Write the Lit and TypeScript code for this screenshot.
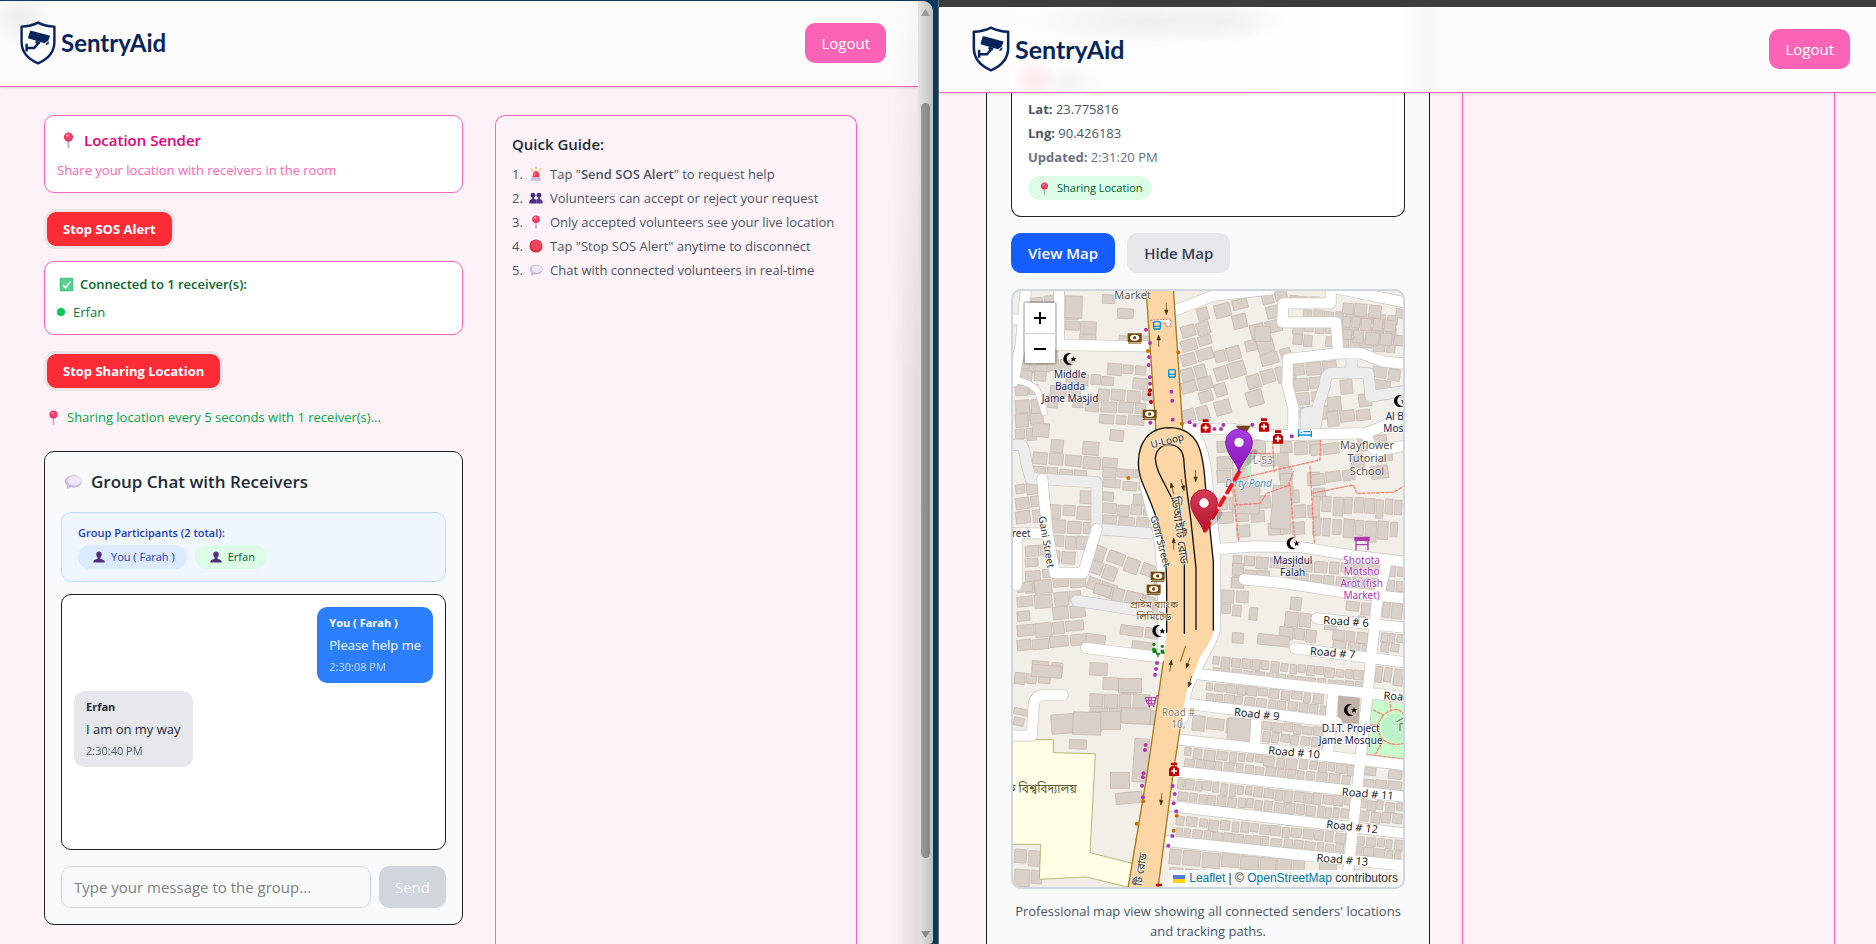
import { LitElement, html, svg, css } from "lit";
import { customElement, property, state } from "lit/decorators.js";

/* ---------- shared styles ---------- */

const base = css`
  * { box-sizing: border-box; }
  h1, h2, h3, p, ol, ul { margin: 0; padding: 0; font-size: inherit; font-weight: inherit; }
  ol, ul { list-style: none; }
  button, input { font: inherit; }
  button { cursor: pointer; border: 0; white-space: nowrap; }
  svg { display: block; flex: none; }
`;

/* ---------- emoji-like icons ---------- */

const glyphs: Record<string, unknown> = {
  pin: svg`<rect x="8.9" y="9" width="2.2" height="10.5" rx="1" fill="#b9aec4"/>
    <circle cx="10" cy="6" r="5.4" fill="#e8315f"/><circle cx="10.6" cy="5.2" r="4" fill="#f4436c"/>
    <circle cx="8.6" cy="4" r="1.5" fill="#ff9db5"/>`,
  check: svg`<rect x="1" y="1" width="18" height="18" rx="1.5" fill="#3fbf7c"/>
    <rect x="2.4" y="2" width="15.6" height="15.6" rx="1" fill="#58d08f"/>
    <path d="M5 10.6l3.6 3.6L15.4 6.4" fill="none" stroke="#fff" stroke-width="2"/>`,
  siren: svg`<path d="M10 .5v3M3.2 2.6l2 2.6M16.8 2.6l-2 2.6" stroke="#f2b950" stroke-width="1.6" stroke-linecap="round"/>
    <path d="M4.6 15l1.6-7.2Q6.6 6 8.4 6h3.2q1.8 0 2.2 1.8L15.400 15z" fill="#ee3a55"/>
    <path d="M7.600 13l1-5" stroke="#ff8c9a" stroke-width="1.600"/>
    <path d="M2.500 19.500q0-5 3-5h9q3 0 3 5z" fill="#cdbbe8"/>`,
  people: svg`<g fill="#4b2f7f"><circle cx="5.800" cy="6" r="3.400"/><circle cx="14.200" cy="6" r="3.400"/>
    <path d="M4.500 8h2.700v3l3 1.600v5.400H.500v-3.400q0-1.600 4-3.600z"/><path d="M12.800 8h2.700v3q4 2 4 3.600V18h-9.200v-5.400l2.500-1.600z" fill="#5a3b94"/></g>`,
  person: svg`<g fill="#53307f"><ellipse cx="10" cy="6" rx="4.600" ry="5"/><path d="M7.600 9h4.800v4l6 2.600q1 .6 1 3.400H.6q0-2.800 1-3.400l6-2.600z"/></g>`,
  ball: svg`<circle cx="10" cy="10" r="9.400" fill="#d9304a"/><circle cx="10.800" cy="9" r="7.600" fill="#e8465c"/>`,
  bubble: svg`<path d="M10.400 2.500c5.200 0 9.200 2.900 9.200 6.900s-4 6.900-9.200 6.900c-1.200 0-2.300-.1-3.300-.4L3.600 17.800c-.6.3-1-.1-.8-.7l.8-3.200C1.800 12.700.8 11.200.8 9.400c0-4 4.400-6.900 9.600-6.900z" fill="#cbbbe0"/>
    <ellipse cx="11.400" cy="8.600" rx="7.600" ry="5.200" fill="#eee6f7"/>`,
};

const icon = (name: string, size: number) =>
  html`<svg width=${size} height=${size} viewBox="0 0 20 20" aria-hidden="true">${glyphs[name]}</svg>`;

/* ---------- brand bar ---------- */

@customElement("brand-bar")
class BrandBar extends LitElement {
  static styles = [base, css`
    :host { display: block; position: relative; }
    .bar {
      height: 86px; display: flex; align-items: center; justify-content: space-between;
      padding: 0 32px 1px 20px; background: #fefbfd; border-bottom: 1px solid #fb64b6;
      box-shadow: 0 1px 3px rgba(0, 0, 0, .12);
    }
    .left { background: radial-gradient(circle at 20px 16px, #eeeced 0, #fefbfd 30px); }
    .wide {
      padding: 0 26px 1px 33px;
      background:
        radial-gradient(ellipse 130px 26px at 210px 14px, rgba(232, 232, 234, .7), transparent),
        radial-gradient(ellipse 60px 24px at 285px 14px, rgba(232, 232, 234, .5), transparent),
        radial-gradient(circle 22px at 96px 73px, rgba(255, 215, 218, .6), transparent),
        radial-gradient(ellipse 34px 22px at 130px 76px, rgba(236, 238, 240, .6), transparent),
        linear-gradient(90deg, #fefbfd 60px, #fdfdfe 90px, #fff 460px, #f8f7f8 490px, #fefbfd 512px);
    }
    .brand { display: flex; align-items: center; gap: 5px; color: #06255a; text-decoration: none; }
    .name { font: 700 24px/32px Lato, sans-serif; }
    .wide .name { font-size: 25px; }
    .out {
      height: 40px; padding: 0 16px; border-radius: 10px; background: #fb64b6; color: #fff;
      font-size: 15px; line-height: 24px;
    }
  `];
  @property({ type: Boolean }) wide = false;
  render() {
    const h = this.wide ? 46 : 44;
    return html`<header class="bar ${this.wide ? "wide" : "left"}">
      <a class="brand" href="#">
        <svg width=${h - 8} height=${h} viewBox="0 0 36 44" aria-hidden="true">
          <path d="M18 1.600C13 4.200 7.500 5.400 1.600 5.600V21c0 9.800 6.400 17 16.400 21.400C28 38 34.400 30.800 34.400 21V5.600C28.500 5.400 23 4.200 18 1.600z" fill="#fff" stroke="#06255a" stroke-width="2.400" stroke-linejoin="round"/>
          <path d="M11.200 9.800l18.200 4.800c.6.200.7.600.5 1l-1.700 4.200-3.600 2.400L8.800 17.600c-.6-.2-.9-.6-.7-1.200l1.800-5.800c.2-.6.6-.9 1.300-.8z" fill="#06255a"/>
          <path d="M26.400 22l2.800-1.800-.8 3-2.600.8z" fill="#06255a"/>
          <path d="M6.600 22.800v7.600M7 27h7.200l3.800-4.400M15.600 20.800l4.400 1.400" fill="none" stroke="#06255a" stroke-width="2.400"/>
        </svg>
        <span class="name">SentryAid</span>
      </a>
      <button class="out">Logout</button>
    </header>`;
  }
}

/* ---------- city map ---------- */

type Block = [number, number, number, number, number, number, number, number];

// x, y, width, height, angle, plot width, plot height, share of plots built on
const blocks: Block[] = [
  [60, 40, 100, 250, -6, 38, 34, 0.75], [195, 24, 240, 145, 2, 48, 40, 0.6],
  [60, 215, 380, 180, 4, 42, 38, 0.6], [45, 300, 60, 170, -4, 40, 44, 0.8],
  [100, 410, 300, 160, 5, 46, 44, 0.55], [150, 610, 130, 250, 3, 44, 46, 0.75],
  [310, 545, 150, 180, 4, 46, 36, 0.8], [45, 600, 75, 130, -8, 40, 40, 0.85],
  [75, 780, 80, 150, -4, 40, 38, 0.8], [270, 770, 220, 150, 20, 52, 50, 0.6],
  [50, 890, 190, 230, -6, 50, 44, 0.8], [240, 880, 240, 60, 14, 46, 46, 0.7],
  [260, 1000, 200, 70, 8, 60, 44, 0.6], [270, 1130, 190, 170, 2, 52, 46, 0.6],
  [45, 1120, 130, 70, 5, 46, 40, 0.6], [44, 1265, 40, 60, 12, 40, 26, 0.9],
  [45, 1690, 80, 110, 4, 40, 60, 0.7],
  [540, 85, 90, 320, -16, 42, 42, 0.75], [640, 60, 200, 160, -14, 46, 44, 0.7],
  [640, 200, 210, 210, -16, 48, 50, 0.75], [870, 30, 100, 12, 2, 34, 20, 0.9],
  [880, 70, 310, 120, 4, 34, 38, 0.8], [1030, 50, 170, 130, 6, 36, 40, 0.8],
  [880, 235, 100, 190, -5, 42, 44, 0.75], [980, 290, 120, 140, -6, 38, 46, 0.75],
  [1120, 240, 90, 80, 8, 46, 40, 0.7], [650, 470, 200, 300, -3, 46, 42, 0.45],
  [840, 470, 120, 300, -3, 34, 48, 0.8], [940, 630, 265, 150, 3, 30, 66, 0.9],
  [930, 480, 270, 140, -8, 44, 44, 0.5], [700, 810, 430, 60, 4, 38, 40, 0.85],
  [665, 830, 60, 290, 3, 36, 42, 0.5], [750, 920, 260, 130, 6, 36, 46, 0.5],
  [1040, 945, 65, 60, 6, 34, 40, 0.8], [1000, 1030, 110, 60, 6, 34, 36, 0.85],
  [1150, 840, 58, 90, 3, 40, 44, 0.9], [1150, 950, 58, 60, 6, 28, 56, 0.9],
  [1145, 1040, 62, 62, 7, 26, 30, 0.9], [640, 1110, 450, 70, 6, 28, 34, 0.95],
  [1130, 1140, 75, 60, 8, 30, 52, 0.9], [620, 1190, 360, 66, 6, 28, 32, 0.95],
  [580, 1290, 170, 60, 6, 50, 48, 0.5], [790, 1305, 190, 70, 7, 27, 33, 0.9],
  [555, 1385, 510, 72, 6, 29, 34, 0.9], [1095, 1445, 110, 66, 6, 36, 34, 0.8],
  [535, 1480, 520, 80, 6, 26, 38, 0.95], [1080, 1540, 125, 70, 6, 25, 34, 0.95],
  [530, 1590, 510, 76, 6, 28, 36, 0.95], [1068, 1650, 140, 66, 6, 27, 32, 0.95],
  [510, 1690, 520, 120, 5, 48, 54, 0.85], [1055, 1750, 150, 50, 6, 32, 40, 0.9],
];

// x, y, width, height, angle of single large buildings
const landmarks: number[][] = [
  [196, 32, 52, 66, 2], [152, 1290, 150, 58, -4], [220, 1280, 84, 68, 2], [303, 1280, 58, 54, 0],
  [365, 1268, 88, 46, 3], [208, 1363, 52, 28, 2], [331, 1462, 58, 48, 0], [346, 1525, 80, 34, -5],
  [355, 1180, 70, 42, 0], [685, 1298, 70, 70, 4], [97, 1138, 90, 36, 4], [405, 1360, 44, 130, 4],
  [775, 1045, 95, 32, 6], [765, 125, 46, 44, 0], [700, 605, 80, 80, 2], [820, 600, 60, 130, 4],
];

function plots(): number[][] {
  let seed = 7;
  const rnd = () => ((seed = (seed * 16807) % 2147483647), seed / 2147483647);
  const out: number[][] = [];
  for (const [x, y, w, h, a, cw, ch, fill] of blocks) {
    const slope = Math.tan((a * Math.PI) / 180);
    const rows = Math.max(1, Math.round(h / ch));
    for (let r = 0; r < rows; r++) {
      let px = x;
      while (px < x + w - 10) {
        const bw = cw * (0.65 + rnd() * 0.5);
        const bh = ch * (0.66 + rnd() * 0.3);
        if (rnd() < fill + 0.08) out.push([px, y + r * ch + (px - x) * slope + rnd() * 4, bw, bh, a]);
        px += bw + 3 + rnd() * 5;
      }
    }
  }
  return out.concat(landmarks);
}

const service = [
  "M30 480H65Q74 490 78 530L92 580L290 592V732L455 745",
  "M230 947L440 980", "M1055 200V262L990 265Q975 270 975 300L960 345L950 378L918 384V430",
  "M1055 262L1105 265L1112 334L1215 318", "M955 370L945 430",
];
const streets = [
  "M78 10L62 180L40 290", "M30 104H60", "M177 10V180L452 184",
  "M127 582L142 740L164 864H250L290 732", "M30 745H142", "M50 760V900", "M258 1089L490 1118",
  "M30 1352H95L102 1255Q106 1232 130 1230H188",
  "M525 76L640 32L810 14", "M992 10V55H850L847 112H1008L1015 205",
  "M1215 236L1150 230L1080 204L1015 205L864 222L862 300L880 370V440",
  "M555 432L700 432L800 452L1100 444L1215 396", "M1100 450Q1112 500 1140 496L1215 482",
  "M1010 10L1215 52", "M655 792L760 784L900 786L1060 812L1215 830",
  "M732 883L850 894L1030 922L1215 940", "M1160 830L1130 960L1100 1250L1040 1803",
  "M950 1000L1215 1028", "M885 1090L1215 1132", "M600 1168L985 1212L1215 1236",
  "M575 1258L1010 1312", "M1000 1215L985 1395", "M770 1290L765 1380", "M530 1363L820 1395L1215 1440",
  "M520 1458L1215 1535", "M500 1562L1215 1645", "M480 1666L1215 1742",
  "M430 560Q440 640 470 720Q492 790 490 1110",
  "M560 432Q612 450 622 600L645 780V1030Q640 1060 610 1110L565 1200Q550 1240 548 1300",
];
const alleys = ["M39 285Q92 290 112 318Q122 340 133 382"];
const footways = [
  "M700 585L870 545L960 525L962 465", "M818 470L822 560", "M700 600L710 660L780 655L800 625L870 600L885 770",
  "M930 545L935 625L1060 600L1070 625L1180 622L1209 605", "M935 625L943 775", "M705 660L716 770",
  "M720 505H810", "M865 600L880 560",
];
const highway =
  "M438 10L468 440C410 460 398 540 430 600C465 680 500 760 500 900V1040L490 1130L440 1475L384 1810H474L520 1460L545 1290L562 1215L600 1115Q640 1060 640 1035V830L615 600C612 500 600 450 548 432L520 10Z";

const purple = [[438, 134], [450, 174], [447, 216], [446, 240], [450, 277], [450, 296], [514, 320], [517, 347], [518, 404], [451, 413],
  [569, 412], [584, 421], [643, 432], [663, 432], [670, 420], [757, 419], [875, 454], [471, 1134], [468, 1152], [465, 1169],
  [437, 1380], [435, 1395], [431, 1465], [429, 1477], [426, 1502], [429, 1537], [518, 1503], [524, 1527], [521, 1555], [529, 1579], [517, 1653], [505, 1682]];
const amber = [[444, 198], [535, 202], [546, 416], [385, 579], [430, 1549], [410, 1616], [530, 1592], [521, 1637]];
const crimson = [[450, 316], [448, 328], [453, 351]];
const arrows = [[499, 72, 180], [476, 168, 0], [587, 573, 180], [517, 610, -15], [548, 600, 165], [521, 776, 0], [512, 1142, 8],
  [564, 1134, 200], [570, 1190, 195], [484, 1543, 185]];

// text, x, y, size, colour, angle
const labels: [string, number, number, number, string, number][] = [
  ["Market", 398, 43, 33, "#5a5a5a", 0], ["Middle", 210, 280, 30, "#1a1a55", 0], ["Badda", 210, 315, 30, "#1a1a55", 0],
  ["Jame Masjid", 210, 351, 30, "#1a1a55", 0], ["reet", 64, 755, 30, "#333", 0], ["Gani Street", 138, 780, 30, "#333", 80],
  ["Goni Street", 480, 778, 30, "#333", 75], ["U-Loop", 502, 478, 30, "#222", -14],
  ["L-53", 788, 538, 30, "#888", 0], ["Mayflower", 1101, 491, 33, "#555", 0], ["Tutorial", 1101, 530, 33, "#555", 0],
  ["School", 1101, 569, 33, "#555", 0], ["Al B", 1184, 405, 30, "#1a1a55", 0], ["Mos", 1180, 441, 30, "#1a1a55", 0],
  ["Masjidul", 878, 837, 30, "#1a1a55", 0], ["Falah", 878, 872, 30, "#1a1a55", 0],
  ["Shotota", 1085, 836, 30, "#a939b9", 0], ["Motsho", 1085, 871, 30, "#a939b9", 0], ["Arot (fish", 1085, 906, 30, "#a939b9", 0],
  ["Market)", 1085, 941, 30, "#a939b9", 0], ["Road # 6", 1038, 1021, 33, "#222", 4], ["Road # 7", 998, 1115, 33, "#222", 5],
  ["Roa", 1180, 1245, 33, "#222", 5], ["Road # 9", 770, 1299, 33, "#222", 6], ["Road # 10", 882, 1414, 33, "#222", 5],
  ["Road # 11", 1103, 1538, 33, "#222", 5], ["Road # 12", 1056, 1637, 33, "#222", 6], ["Road # 13", 1027, 1736, 33, "#222", 5],
  ["Road #", 535, 1294, 30, "#8a8072", 0], ["10,", 535, 1329, 30, "#8a8072", 0],
  ["D.I.T. Project", 1052, 1340, 30, "#1a1a55", 0], ["Jame Mosque", 1052, 1376, 30, "#1a1a55", 0],
  ["প্রাইম ব্যাংক", 462, 970, 30, "#7a5310", 0], ["লিমিটেড", 462, 1005, 30, "#7a5310", 0],
  ["ক বিশ্ববিদ্যালয়", 124, 1523, 36, "#5c5c1c", 0], ["ডিআইটি রোড", 536, 745, 36, "#333", 82], ["টি রোড", 424, 1762, 33, "#333", -80],
];

const marker = (x: number, y: number, from: string, to: string, id: string) => svg`
  <g transform="translate(${x} ${y})">
    <defs><linearGradient id=${id} x1="0" y1="0" x2="0" y2="1"><stop offset="0" stop-color=${from}/><stop offset="1" stop-color=${to}/></linearGradient></defs>
    <path d="M4 -2L36 -62Q52 -76 56 -56Q46 -30 4 -2z" fill="#000" opacity=".2"/>
    <path d="M0 0C-6 -26 -40 -56 -40 -88A40 40 0 0 1 40 -88C40 -56 6 -26 0 0z" fill="url(#${id})" stroke=${to} stroke-width="3"/>
    <circle cx="0" cy="-88" r="14" fill="#fff"/>
  </g>`;

@customElement("city-map")
class CityMap extends LitElement {
  static styles = [base, css`
    :host { display: block; }
    .frame { position: relative; height: 600px; border: 2px solid #d1d5dc; border-radius: 10px; overflow: hidden; background: #f2efe9; }
    .tiles { width: 100%; height: 100%; }
    .bld { fill: #d9d0c9; stroke: #c4b5ab; stroke-width: 2; }
    .line { fill: none; stroke-linejoin: round; stroke-linecap: round; }
    .lbl { font-family: "Noto Sans", "Noto Sans Bengali", sans-serif; text-anchor: middle; paint-order: stroke; stroke: rgba(255, 255, 255, .7); stroke-width: 5px; stroke-linejoin: round; }
    .zoom { position: absolute; left: 10px; top: 10px; display: flex; flex-direction: column; border: 2px solid rgba(0, 0, 0, .2); border-radius: 4px; background-clip: padding-box; }
    .step { width: 30px; height: 30px; padding: 0; background: #fff; color: #000; display: grid; place-items: center; }
    .step + .step { border-top: 1px solid #ccc; }
    .credit { position: absolute; right: 0; bottom: 0; display: flex; align-items: center; gap: 4px; padding: 0 5px; background: rgba(255, 255, 255, .8); color: #333; font: 12px/17px "Liberation Sans", sans-serif; }
    .credit a { color: #0078a8; text-decoration: none; }
  `];
  render() {
    return html`<div class="frame">
      <svg class="tiles" viewBox="39 18 1170 1788" preserveAspectRatio="xMidYMid slice" role="img" aria-label="Map of Middle Badda">
        ${plots().map(([x, y, w, h, a]) => svg`<rect class="bld" x=${x} y=${y} width=${w} height=${h} transform="rotate(${a} ${x} ${y})"/>`)}
        <rect x="1010" y="1232" width="90" height="150" fill="#f2efe9"></rect>
        <rect x="1015" y="1234" width="62" height="80" fill="#c2b3aa" stroke="#b3a196" stroke-width="2" transform="rotate(2 1046 1275)"></rect>
        <path d="M36 1364H160V1403L286 1406L270 1703L402 1736L385 1806L258 1776L118 1783L122 1678H36z" fill="#ffffe5" stroke="#b5b57c" stroke-width="3"></path>
        <path d="M1112 1240L1215 1262V1422L1092 1404z" fill="#c8facc"></path>
        <circle cx="1186" cy="1328" r="42" fill="#bdf2c8"></circle>
        <path class="line" d="M1094 1407L1209 1422M1120 1275L1150 1290Q1190 1260 1209 1285M1150 1290Q1120 1330 1150 1365Q1180 1385 1209 1375M1110 1320H1136M1150 1365L1128 1405M1170 1245L1172 1275" stroke="#fa8072" stroke-width="4" stroke-dasharray="8 6"></path>
        <path d="M740 505h14v75h-14z" fill="#c8ecc8"></path>
        ${footways.map((d) => svg`<path class="line" d=${d} stroke="#fa8072" stroke-width="4" stroke-dasharray="8 6"/>`)}
        ${service.map((d) => svg`<path class="line" d=${d} stroke="#c9c7c5" stroke-width="36"/>`)}
        ${service.map((d) => svg`<path class="line" d=${d} stroke="#ececec" stroke-width="32"/>`)}
        ${streets.map((d) => svg`<path class="line" d=${d} stroke="#c8c5c2" stroke-width="35"/>`)}
        ${alleys.map((d) => svg`<path class="line" d=${d} stroke="#c8c5c2" stroke-width="22"/>`)}
        ${streets.map((d) => svg`<path class="line" d=${d} stroke="#fff" stroke-width="31"/>`)}
        ${alleys.map((d) => svg`<path class="line" d=${d} stroke="#fff" stroke-width="18"/>`)}
        <path d=${highway} fill="#fcd6a4"></path>
        <path class="line" d="M438 10L468 438M520 10L548 430M490 1130L440 1475L384 1810M520 1460L474 1810M545 1300L520 1460M556 1085L542 1128" stroke="#a57a1c" stroke-width="4"></path>
        <path class="line" d="M500 1042V900C500 760 465 680 430 600C398 530 415 428 510 428C600 430 610 510 616 600L640 830V1035M553 1045V840M522 655C500 600 466 560 466 520C470 465 545 465 551 520C556 600 566 650 572 700L588 850V1033" stroke="#111" stroke-width="4"></path>
        ${arrows.map(([x, y, a]) => svg`<path transform="translate(${x} ${y}) rotate(${a})" d="M0 18V-4M0 -17L-5 -3H5z" fill="#4a3208" stroke="#4a3208" stroke-width="2"/>`)}
        ${purple.map(([x, y]) => svg`<circle cx=${x} cy=${y} r="6" fill="#ac39ac"/>`)}
        ${amber.map(([x, y]) => svg`<circle cx=${x} cy=${y} r="6" fill="#c77400"/>`)}
        ${crimson.map(([x, y]) => svg`<circle cx=${x} cy=${y} r="6" fill="#bf0000"/>`)}
        ${[[404, 158], [449, 387], [473, 873], [461, 912]].map(([x, y]) => svg`<g transform="translate(${x} ${y})"><path d="M-21 -13H21V13H-21z" fill="#734a08"/><path d="M-20 16H20" stroke="#734a08" stroke-width="3"/><ellipse rx="14" ry="9" fill="#fff"/><circle r="5" fill="#734a08"/></g>`)}
        ${[[208, 222], [1200, 348], [878, 775], [475, 1038], [1050, 1275]].map(([x, y]) => svg`<g transform="translate(${x} ${y})"><path d="M6 -17A18 18 0 1 0 10 15A14.500 14.500 0 1 1 6 -17z" fill="#000"/><path d="M12 -9l2.500 6.500h7l-5.500 4 2 7-6-4-6 4 2-7-5.500-4h7z" fill="#000"/></g>`)}
        ${[[617, 425], [792, 422], [834, 458], [522, 1455], [477, 1818]].map(([x, y]) => svg`<g transform="translate(${x} ${y})"><path d="M-9 -22H9V-14H-9zM-15 18V-4L-8 -11H8L15 -4V18z" fill="#bf0000"/><path d="M0 -6V12M-9 3H9" stroke="#fff" stroke-width="5"/></g>`)}
        <path d="M452 106L512 102V124H498V114H458z" fill="#fff" stroke="#e0685c" stroke-width="3" stroke-dasharray="6 3"></path>
        ${[[471, 122], [516, 266]].map(([x, y]) => svg`<g transform="translate(${x} ${y})"><rect x="-10" y="-12" width="20" height="22" rx="3" fill="#fcd6a4" stroke="#0092da" stroke-width="4"/><path d="M-10 2H10M-7 14V10M7 14V10" stroke="#0092da" stroke-width="4"/></g>`)}
        <path d="M896 433V456M896 450H934M934 456V438M902 442H906M910 440H930" fill="none" stroke="#0092da" stroke-width="4"></path>
        <path d="M706 422H752L742 438H722z" fill="#734a08"></path>
        <path d="M1065 757H1107V766H1065zM1068 766V796M1104 766V796M1066 779H1106" fill="#ac39ac" stroke="#ac39ac" stroke-width="4"></path>
        <path d="M436 1238H468L464 1256H442zM476 1232H470L462 1260H444M446 1238V1256M454 1238V1256M437 1247H467" fill="none" stroke="#ac39ac" stroke-width="3"></path>
        <circle cx="448" cy="1264" r="3" fill="#ac39ac"></circle><circle cx="461" cy="1264" r="3" fill="#ac39ac"></circle>
        <g fill="#0e8517"><circle cx="462" cy="1078" r="5"></circle><circle cx="487" cy="1084" r="5"></circle><path d="M456 1090h12l4 14h-14zM482 1094h10l2 12h-12zM468 1104h12v5h-12zM472 1109h4v8h-4z"></path></g>
        <path d="M1190 1310L1209 1300M1200 1338V1316H1209" fill="none" stroke="#666" stroke-width="3"></path>
        <text class="lbl" x="745" y="606" font-size="30" fill="#4a8fc4" font-style="italic">Dirty Pond</text>
        ${labels.map(([t, x, y, s, c, a]) => svg`<text class="lbl" x=${x} y=${y} font-size=${s} fill=${c} transform="rotate(${a} ${x} ${y - 9})">${t}</text>`)}
        <path d="M717 562L612 742" stroke="#f8141c" stroke-width="12" stroke-dasharray="26 18" stroke-linecap="round"></path>
        ${marker(612, 742, "#d63a55", "#b3142f", "near")}
        ${marker(717, 560, "#a63fe0", "#8a12b8", "far")}
      </svg>
      <div class="zoom">
        <button class="step" aria-label="Zoom in"><svg width="12" height="12" viewBox="0 0 12 12"><path d="M6 0v12M0 6h12" stroke="#000" stroke-width="2"/></svg></button>
        <button class="step" aria-label="Zoom out"><svg width="12" height="12" viewBox="0 0 12 12"><path d="M0 6h12" stroke="#000" stroke-width="2"/></svg></button>
      </div>
      <div class="credit">
        <svg width="12" height="8" viewBox="0 0 12 8"><path fill="#4c7be1" d="M0 0h12v4H0z"/><path fill="#ffd500" d="M0 4h12v4H0z"/></svg>
        <span><a href="#">Leaflet</a> | © <a href="#">OpenStreetMap</a> contributors</span>
      </div>
    </div>`;
  }
}

/* ---------- sender side ---------- */

interface Message { who: string; text: string; at: string; mine: boolean; }

@customElement("sender-view")
class SenderView extends LitElement {
  static styles = [base, css`
    :host { display: block; }
    .cols { display: grid; grid-template-columns: 419fr 362fr; gap: 32px; padding: 28px 61px 0 44px; min-height: 100%; }
    .main { display: flex; flex-direction: column; align-items: flex-start; }
    .card { width: 100%; padding: 12px; background: #fff; border: 1px solid #fb64b6; border-radius: 10px; }
    .row { display: flex; align-items: center; gap: 5px; }
    .slot { width: 22px; display: grid; place-items: center; flex: none; }
    .slot.tight { width: 18px; }
    .title { font-size: 15px; line-height: 24px; font-weight: 600; color: #e60076; }
    .sub { margin-top: 8px; color: #fb64b6; }
    .stop { height: 40px; padding: 0 16px; border: 3px solid #e8e6e8; border-radius: 12px; background: #fb2c36; color: #fff; font-size: 13px; font-weight: 700; }
    .stop.first { margin: 16px 0 12px; }
    .stop.second { margin: 16px 0; }
    .ok { color: #016630; font-weight: 600; }
    .peer { margin-top: 8px; gap: 8px; color: #008236; }
    .dot { width: 8px; height: 8px; border-radius: 50%; background: #00c950; }
    .note { color: #00a63e; }
    .chat { width: 100%; margin-top: 24px; padding: 16px; background: #f9fafb; border: 1px solid #1e2023; border-radius: 10px; }
    .chat-title { gap: 6px; font-size: 17px; line-height: 28px; font-weight: 600; color: #1e2939; }
    .chat-title .slot { width: 24px; }
    .group { margin-top: 16px; padding: 12px 16px; background: #eff6ff; border: 1px solid #bedbff; border-radius: 10px; }
    .group-title { font-size: 11px; line-height: 16px; font-weight: 600; color: #193cb8; }
    .pills { display: flex; gap: 8px; margin-top: 4px; }
    .pill { display: flex; align-items: center; gap: 6px; padding: 0 12px 0 15px; border-radius: 12px; font-size: 11px; line-height: 24px; }
    .pill.you { background: #dbeafe; color: #193cb8; }
    .pill.other { background: #dcfce7; color: #016630; }
    .log { display: flex; flex-direction: column; align-items: flex-start; gap: 8px; height: 256px; margin-top: 12px; padding: 12px; background: #fff; border: 1px solid #1e2023; border-radius: 10px; }
    .msg { padding: 8px 12px; border-radius: 10px; background: #e5e7eb; color: #1e2939; }
    .msg.mine { align-self: flex-end; background: #2b7fff; color: #fff; }
    .who { font-size: 11px; line-height: 16px; font-weight: 700; }
    .text { margin: 4px 0; }
    .at { font-size: 11px; line-height: 16px; opacity: .75; }
    .send-row { display: flex; gap: 8px; margin-top: 16px; font-size: 15px; }
    .box { flex: 1; min-width: 0; height: 42px; padding: 0 12px; background: transparent; border: 1px solid #d1d5dc; border-radius: 10px; }
    .box::placeholder { color: #808080; opacity: 1; }
    .send { padding: 0 16px; border-radius: 10px; background: #d1d5dc; color: #f9fafb; }
    .guide { padding: 16px; border: 1px solid #fb64b6; border-radius: 10px 10px 0 0; border-bottom: 0; }
    .guide-title { font-size: 15px; line-height: 24px; font-weight: 600; color: #1e2939; }
    .steps { display: flex; flex-direction: column; gap: 4px; margin-top: 8px; color: #4a5565; }
    .step { display: flex; align-items: center; white-space: nowrap; }
    .num { width: 17px; }
    .words { margin-left: 7px; }
    .strong { font-weight: 600; }
  `];
  @state() private log: Message[] = [
    { who: "You ( Farah )", text: "Please help me", at: "2:30:08 PM", mine: true },
    { who: "Erfan", text: "I am on my way", at: "2:30:40 PM", mine: false },
  ];
  private steps: [string, unknown][] = [
    ["siren", html`Tap "<b class="strong">Send SOS Alert</b>" to request help`],
    ["people", "Volunteers can accept or reject your request"],
    ["pin", "Only accepted volunteers see your live location"],
    ["ball", 'Tap "Stop SOS Alert" anytime to disconnect'],
    ["bubble", "Chat with connected volunteers in real-time"],
  ];
  render() {
    return html`<main class="cols">
      <section class="main">
        <div class="card">
          <h2 class="row title"><span class="slot">${icon("pin", 17)}</span>Location Sender</h2>
          <p class="sub">Share your location with receivers in the room</p>
        </div>
        <button class="stop first">Stop SOS Alert</button>
        <div class="card">
          <h3 class="row ok"><span class="slot tight">${icon("check", 15)}</span>Connected to 1 receiver(s):</h3>
          <p class="row peer"><span class="dot"></span>Erfan</p>
        </div>
        <button class="stop second">Stop Sharing Location</button>
        <p class="row note"><span class="slot tight">${icon("pin", 15)}</span>Sharing location every 5 seconds with 1 receiver(s)...</p>
        <section class="chat">
          <h2 class="row chat-title"><span class="slot">${icon("bubble", 18)}</span><span>Group Chat with Receivers</span></h2>
          <div class="group">
            <h3 class="group-title">Group Participants (2 total):</h3>
            <div class="pills">
              <span class="pill you">${icon("person", 12)}You ( Farah )</span>
              <span class="pill other">${icon("person", 12)}Erfan</span>
            </div>
          </div>
          <div class="log">
            ${this.log.map((m) => html`<div class="msg ${m.mine ? "mine" : ""}">
              <p class="who">${m.who}</p><p class="text">${m.text}</p><p class="at">${m.at}</p>
            </div>`)}
          </div>
          <form class="send-row" @submit=${(e: Event) => e.preventDefault()}>
            <input class="box" type="text" aria-label="Message" placeholder="Type your message to the group..." />
            <button class="send" disabled>Send</button>
          </form>
        </section>
      </section>
      <aside class="guide">
        <h2 class="guide-title">Quick Guide:</h2>
        <ol class="steps">
          ${this.steps.map(([name, text], i) => html`<li class="step"><span class="num">${i + 1}.</span>${icon(name, 14)}<span class="words">${text}</span></li>`)}
        </ol>
      </aside>
    </main>`;
  }
}

/* ---------- receiver side ---------- */

@customElement("receiver-view")
class ReceiverView extends LitElement {
  static styles = [base, css`
    :host { display: block; }
    .cols { display: grid; grid-template-columns: 444fr 373fr; gap: 32px; padding: 0 41px 0 47px; min-height: 100%; }
    .panel { padding: 0 24px; background: #f9fafb; border: solid #1e2023; border-width: 0 1px; }
    .guide { border: solid #fb64b6; border-width: 0 1px; }
    .info { display: flex; flex-direction: column; align-items: flex-start; gap: 4px; padding: 6px 16px 16px; background: #fff; border: solid #1e2023; border-width: 0 1px 1px; border-radius: 0 0 10px 10px; color: #4a5565; }
    .late { color: #6a7282; }
    .pill { display: flex; align-items: center; gap: 6px; margin-top: 5px; padding: 0 9px 0 10px; border-radius: 12px; background: #dcfce7; color: #016630; font-size: 11px; line-height: 24px; }
    .actions { display: flex; gap: 12px; margin: 16px 0; font-size: 15px; font-weight: 600; }
    .act { height: 40px; padding: 0 17px; border-radius: 10px; background: #e5e7eb; color: #364153; }
    .act.on { background: #155dfc; color: #fff; }
    .cap { margin-top: 12px; text-align: center; color: #4a5565; }
  `];
  render() {
    return html`<main class="cols">
      <section class="panel">
        <div class="info">
          <p><b>Lat:</b> 23.775816</p>
          <p><b>Lng:</b> 90.426183</p>
          <p class="late"><b>Updated:</b> 2:31:20 PM</p>
          <span class="pill">${icon("pin", 13)}Sharing Location</span>
        </div>
        <div class="actions"><button class="act on">View Map</button><button class="act">Hide Map</button></div>
        <city-map></city-map>
        <p class="cap">Professional map view showing all connected senders' locations and tracking paths.</p>
      </section>
      <aside class="guide"></aside>
    </main>`;
  }
}

/* ---------- two windows side by side ---------- */

@customElement("app-root")
class AppRoot extends LitElement {
  static styles = [base, css`
    :host { display: block; font: 13px/20px "Open Sans", sans-serif; }
    .desk { display: grid; grid-template-columns: 939fr 937fr; height: 100vh; overflow: hidden; background: #073a5f; }
    .win { display: flex; min-width: 0; min-height: 0; overflow: hidden; }
    .first { position: relative; padding: 1px 5px 0 0; border-right: 1px solid #6e6e72; }
    .page { flex: 1; min-width: 0; display: flex; flex-direction: column; overflow: hidden; background: #fdf2f8; }
    .page > :last-child { flex: 1; min-height: 0; }
    .track { width: 15px; display: flex; flex-direction: column; align-items: center; justify-content: space-between; padding: 8px 0 6px; background: linear-gradient(90deg, #e4e4e4, #c0c0c0); border-radius: 0 10px 4px 0; }
    .thumb { flex: 1; width: 9px; margin: 87px 0 73px; border-radius: 5px; background: linear-gradient(90deg, #9a9a9a, #858585); }
    .shade { position: absolute; right: 20px; top: 1px; bottom: 0; width: 26px; background: linear-gradient(90deg, transparent, rgba(60, 40, 60, .12)); -webkit-mask: linear-gradient(rgba(0, 0, 0, .2), #000 40%); mask: linear-gradient(rgba(0, 0, 0, .2), #000 40%); pointer-events: none; }
    .second { border-top: 7px solid #3c3c3c; }
  `];
  render() {
    return html`<div class="desk">
      <div class="win first">
        <div class="page"><brand-bar></brand-bar><sender-view></sender-view></div>
        <div class="track">
          <svg width="9" height="7" viewBox="0 0 9 7"><path d="M4.500 0L9 7H0z" fill="#999"/></svg>
          <div class="thumb"></div>
          <svg width="9" height="7" viewBox="0 0 9 7"><path d="M0 0h9L4.500 7z" fill="#8a8a8a"/></svg>
        </div>
        <div class="shade"></div>
      </div>
      <div class="win second">
        <div class="page"><brand-bar wide></brand-bar><receiver-view></receiver-view></div>
      </div>
    </div>`;
  }
}
